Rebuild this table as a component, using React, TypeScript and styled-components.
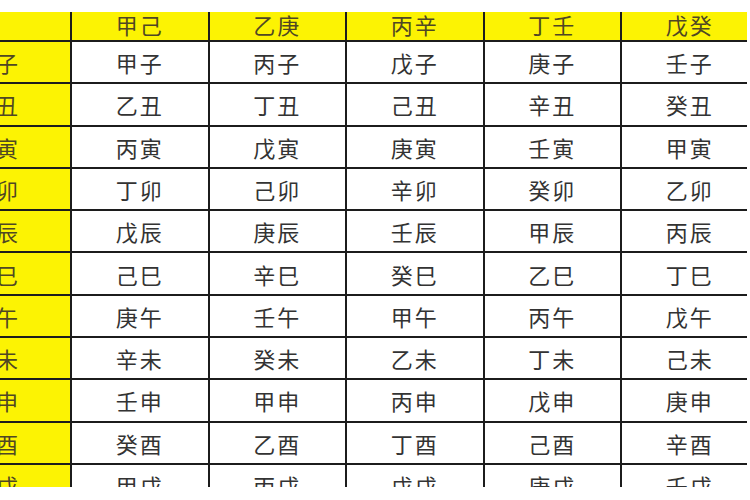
import React from 'react'
import styled, { createGlobalStyle } from 'styled-components'

const GlobalStyle = createGlobalStyle`
    html, body {
        margin: 0;
        padding: 0;
        background: #ffffff;
    }
    body {
        font-family: "Noto Sans CJK SC", "Noto Sans", sans-serif;
    }
`

const Frame = styled.div`
    box-sizing: border-box;
    padding-top: 12px;
    width: 747px;
    height: 487px;
    overflow: hidden;
`

const Grid = styled.div`
    display: grid;
    grid-template-columns: 72px repeat(5, 137.5px);
    grid-template-rows: 30px repeat(11, 42.3px);
    width: max-content;
`

const Cell = styled.div<{ $yellow?: boolean; $head?: boolean; $side?: boolean }>`
    box-sizing: border-box;
    display: flex;
    align-items: center;
    justify-content: ${p => (p.$side ? 'flex-start' : 'center')};
    padding-bottom: ${p => (p.$head ? '3px' : '0')};
    background: ${p => (p.$yellow ? '#fcf303' : '#ffffff')};
    border-right: 2px solid #1c1c1c;
    border-bottom: 2px solid #1c1c1c;
    color: ${p => (p.$yellow ? '#4f4724' : '#333333')};
    font-size: 22px;
    line-height: 1.1;
    font-weight: 400;
    letter-spacing: 2px;
    white-space: nowrap;
`

const SideText = styled.span`
    margin-left: -4px;
`

const heads = ['甲己', '乙庚', '丙辛', '丁壬', '戊癸']

const rows: [string, string[]][] = [
    ['子', ['甲子', '丙子', '戊子', '庚子', '壬子']],
    ['丑', ['乙丑', '丁丑', '己丑', '辛丑', '癸丑']],
    ['寅', ['丙寅', '戊寅', '庚寅', '壬寅', '甲寅']],
    ['卯', ['丁卯', '己卯', '辛卯', '癸卯', '乙卯']],
    ['辰', ['戊辰', '庚辰', '壬辰', '甲辰', '丙辰']],
    ['巳', ['己巳', '辛巳', '癸巳', '乙巳', '丁巳']],
    ['午', ['庚午', '壬午', '甲午', '丙午', '戊午']],
    ['未', ['辛未', '癸未', '乙未', '丁未', '己未']],
    ['申', ['壬申', '甲申', '丙申', '戊申', '庚申']],
    ['酉', ['癸酉', '乙酉', '丁酉', '己酉', '辛酉']],
    ['戌', ['甲戌', '丙戌', '戊戌', '庚戌', '壬戌']],
]

export default function App() {
    return (
        <>
            <GlobalStyle />
            <Frame>
                <Grid>
                    <Cell $yellow $head />
                    {heads.map(h => (
                        <Cell key={h} $yellow $head>{h}</Cell>
                    ))}
                    {rows.map(([branch, cells]) => (
                        <React.Fragment key={branch}>
                            <Cell $yellow $side>
                                <SideText>{branch}</SideText>
                            </Cell>
                            {cells.map(c => (
                                <Cell key={c}>{c}</Cell>
                            ))}
                        </React.Fragment>
                    ))}
                </Grid>
            </Frame>
        </>
    )
}
